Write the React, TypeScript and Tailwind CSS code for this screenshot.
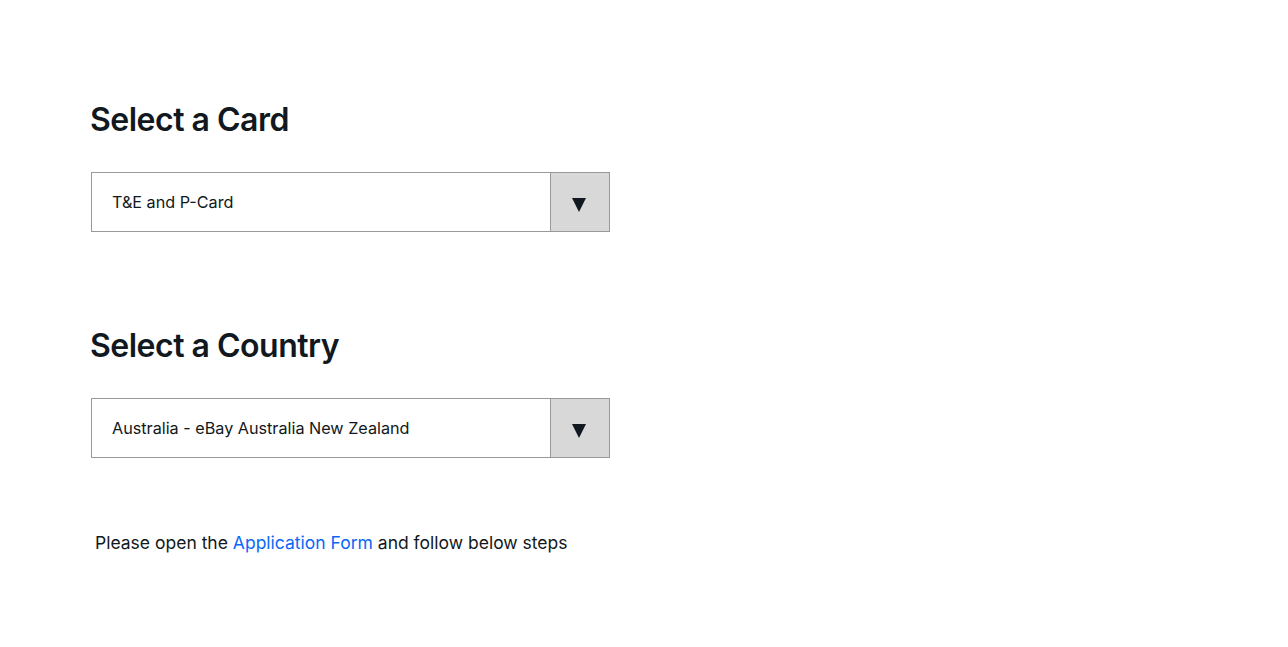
import React from 'react';

const font = { fontFamily: 'Inter, "Noto Sans", Arial, sans-serif' };

function SelectBox({ value }: { value: string }) {
  return (
    <div className="ml-[1px] flex h-[60px] w-[519px] border border-[#999999] bg-white">
      <div className="flex flex-1 items-center pl-[20px] text-[16.2px] text-[#111820]">{value}</div>
      <div className="flex w-[59px] items-center justify-center border-l border-[#999999] bg-[#d8d8d8] pr-[2px] pt-[5px]">
        <svg width="14" height="14" viewBox="0 0 14 14">
          <polygon points="0,0 14,0 7,14" fill="#111820" />
        </svg>
      </div>
    </div>
  );
}

export default function App() {
  return (
    <div className="min-h-[647px] bg-white pl-[90px] pt-[100px] text-[#111820]" style={font}>
      <h2 className="text-[32px] font-semibold leading-[40px] tracking-[-0.5px]">Select a Card</h2>
      <div className="mt-[32px]">
        <SelectBox value="T&E and P-Card" />
      </div>
      <h2 className="mt-[94px] text-[32px] font-semibold leading-[40px] tracking-[-0.5px]">Select a Country</h2>
      <div className="mt-[32px]">
        <SelectBox value="Australia - eBay Australia New Zealand" />
      </div>
      <p className="mt-[71px] pl-[5px] text-[17.5px] leading-[27px]">
        Please open the <a className="text-[#0968f6]" href="#">Application Form</a> and follow below steps
      </p>
    </div>
  );
}
